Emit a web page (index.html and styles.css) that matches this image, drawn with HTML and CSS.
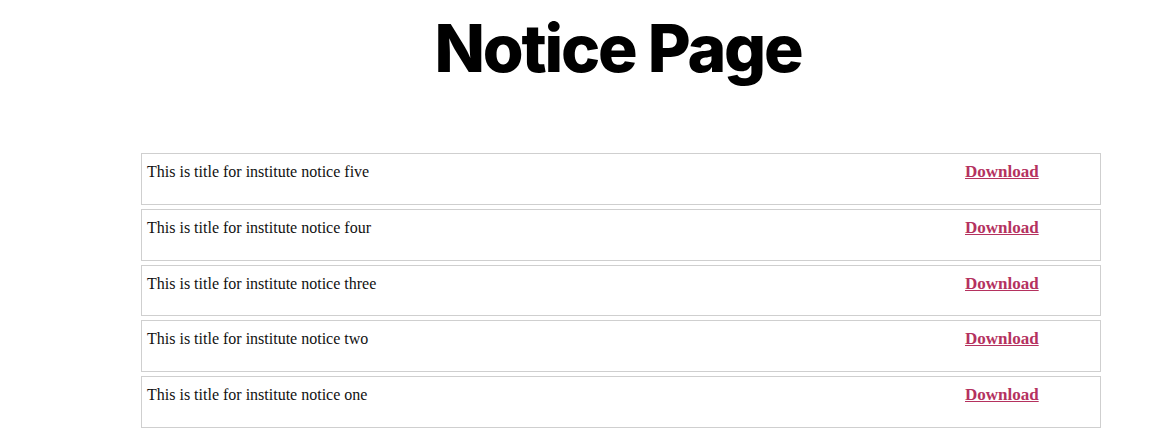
FILE: index.html
```html
<!DOCTYPE html>
<html>
<head>
<meta charset="utf-8">
<link rel="stylesheet" href="styles.css">
</head>
<body>
<div class="page">
  <h1 class="title">Notice Page</h1>
  <div class="list">
    <div class="row"><span class="name">This is title for institute notice five</span><a class="dl" href="#">Download</a></div>
    <div class="row"><span class="name">This is title for institute notice four</span><a class="dl" href="#">Download</a></div>
    <div class="row"><span class="name">This is title for institute notice three</span><a class="dl" href="#">Download</a></div>
    <div class="row"><span class="name">This is title for institute notice two</span><a class="dl" href="#">Download</a></div>
    <div class="row"><span class="name">This is title for institute notice one</span><a class="dl" href="#">Download</a></div>
  </div>
</div>
</body>
</html>
```
FILE: styles.css
```css
html, body { margin: 0; padding: 0; background: #fff; }
.page { padding-left: 141px; width: 960px; }
.title {
  margin: 0;
  padding-top: 8px;
  padding-right: 6px;
  height: 145px;
  box-sizing: border-box;
  text-align: center;
  font-family: Inter, "Noto Sans", sans-serif;
  font-weight: 800;
  font-size: 66px;
  letter-spacing: -0.033em;
  line-height: 80px;
  color: #000;
}
.list { display: flex; flex-direction: column; gap: 4px; padding-top: 8px; }
.row {
  display: flex;
  align-items: flex-start;
  height: 51.75px;
  box-sizing: border-box;
  border: 1px solid #cfcfcf;
  padding: 9px 5px 8px;
  font-family: "Liberation Serif", "Times New Roman", serif;
  font-size: 16px;
  color: #111;
}
.name { flex: 1; }
.dl {
  width: 130px;
  font-weight: 700;
  font-size: 17px;
  line-height: 18px;
  color: #b5325f;
  text-decoration: underline;
}
```
